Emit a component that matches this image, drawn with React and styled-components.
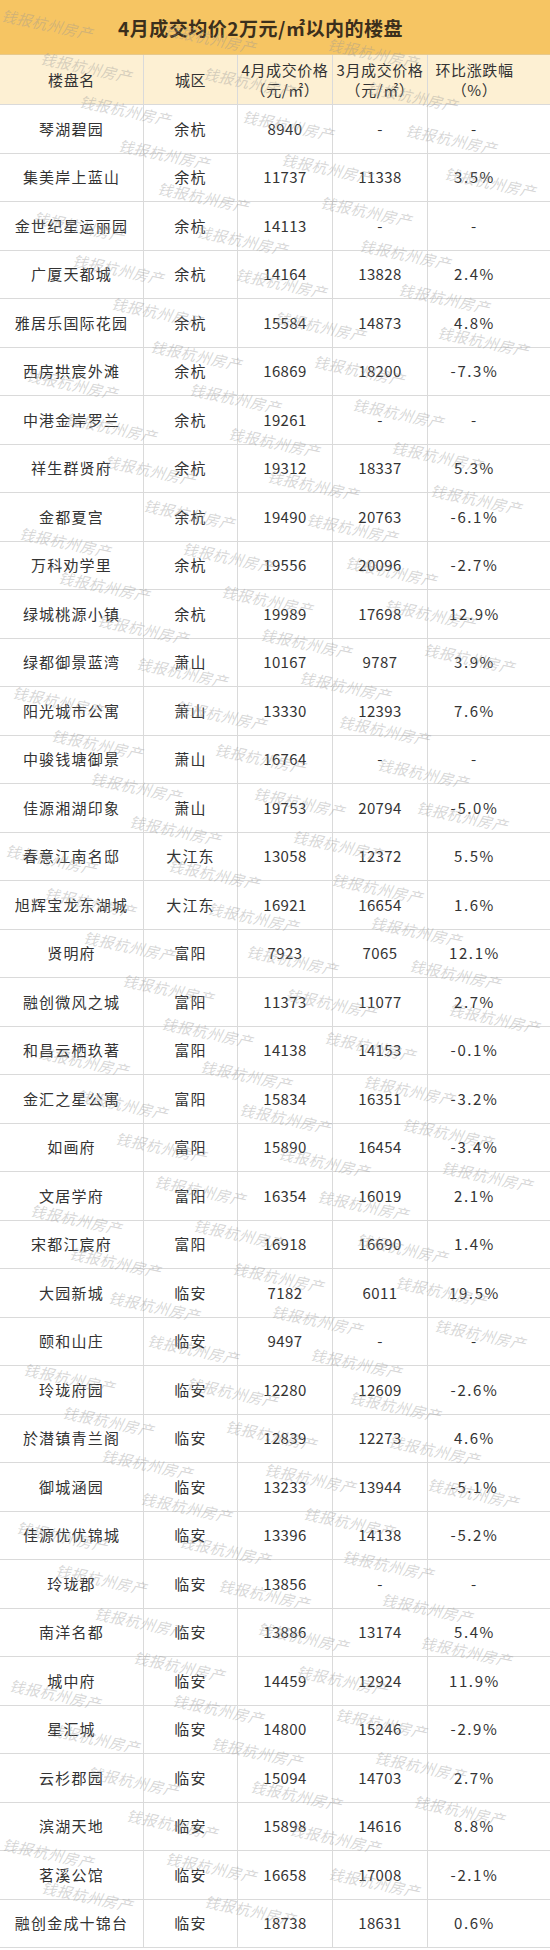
import styled, { createGlobalStyle } from "styled-components";

const GlobalStyle = createGlobalStyle`
  html, body {
    margin: 0;
    padding: 0;
    background: #ffffff;
  }
  body {
    font-family: "Noto Sans CJK SC", "Noto Sans", sans-serif;
    color: #333333;
  }
`;

const rows = [
  ["琴湖碧园", "余杭", "8940", "-", "-"],
  ["集美岸上蓝山", "余杭", "11737", "11338", "3.5%"],
  ["金世纪星运丽园", "余杭", "14113", "-", "-"],
  ["广厦天都城", "余杭", "14164", "13828", "2.4%"],
  ["雅居乐国际花园", "余杭", "15584", "14873", "4.8%"],
  ["西房拱宸外滩", "余杭", "16869", "18200", "-7.3%"],
  ["中港金岸罗兰", "余杭", "19261", "-", "-"],
  ["祥生群贤府", "余杭", "19312", "18337", "5.3%"],
  ["金都夏宫", "余杭", "19490", "20763", "-6.1%"],
  ["万科劝学里", "余杭", "19556", "20096", "-2.7%"],
  ["绿城桃源小镇", "余杭", "19989", "17698", "12.9%"],
  ["绿都御景蓝湾", "萧山", "10167", "9787", "3.9%"],
  ["阳光城市公寓", "萧山", "13330", "12393", "7.6%"],
  ["中骏钱塘御景", "萧山", "16764", "-", "-"],
  ["佳源湘湖印象", "萧山", "19753", "20794", "-5.0%"],
  ["春意江南名邸", "大江东", "13058", "12372", "5.5%"],
  ["旭辉宝龙东湖城", "大江东", "16921", "16654", "1.6%"],
  ["贤明府", "富阳", "7923", "7065", "12.1%"],
  ["融创微风之城", "富阳", "11373", "11077", "2.7%"],
  ["和昌云栖玖著", "富阳", "14138", "14153", "-0.1%"],
  ["金汇之星公寓", "富阳", "15834", "16351", "-3.2%"],
  ["如画府", "富阳", "15890", "16454", "-3.4%"],
  ["文居学府", "富阳", "16354", "16019", "2.1%"],
  ["宋都江宸府", "富阳", "16918", "16690", "1.4%"],
  ["大园新城", "临安", "7182", "6011", "19.5%"],
  ["颐和山庄", "临安", "9497", "-", "-"],
  ["玲珑府园", "临安", "12280", "12609", "-2.6%"],
  ["於潜镇青兰阁", "临安", "12839", "12273", "4.6%"],
  ["御城涵园", "临安", "13233", "13944", "-5.1%"],
  ["佳源优优锦城", "临安", "13396", "14138", "-5.2%"],
  ["玲珑郡", "临安", "13856", "-", "-"],
  ["南洋名都", "临安", "13886", "13174", "5.4%"],
  ["城中府", "临安", "14459", "12924", "11.9%"],
  ["星汇城", "临安", "14800", "15246", "-2.9%"],
  ["云杉郡园", "临安", "15094", "14703", "2.7%"],
  ["滨湖天地", "临安", "15898", "14616", "8.8%"],
  ["茗溪公馆", "临安", "16658", "17008", "-2.1%"],
  ["融创金成十锦台", "临安", "18738", "18631", "0.6%"],
];

// watermark positions, staggered but kept inside the sheet
const marks = Array.from({ length: 132 }, (_, i) => ({
  top: 4 + i * 14.4,
  left: 4 + ((i * 163) % 450),
}));

const Sheet = styled.div`
  position: relative;
  width: 550px;
  overflow: hidden;
`;

const Title = styled.div`
  height: 55px;
  background: #f6c563;
  display: flex;
  align-items: center;
  justify-content: center;
  padding-right: 29px;
  font-size: 19px;
  font-weight: 700;
  color: #3b2f1c;
  letter-spacing: 0.5px;
  border-bottom: 1px solid #e7c98c;
  box-sizing: border-box;
`;

const Table = styled.div`
  display: grid;
  grid-template-columns: 143px 94px 95px 95px 123px;
`;

const Row = styled.div`
  display: contents;
`;

const Cell = styled.div`
  height: ${(p) => (p.$head ? "50px" : "48.5px")};
  box-sizing: border-box;
  display: flex;
  flex-direction: column;
  align-items: center;
  justify-content: center;
  text-align: center;
  background: ${(p) => (p.$head ? "#fdf0d3" : "#ffffff")};
  border-bottom: 1px solid #dadada;
  border-left: ${(p) => (p.$first ? "none" : "1px solid #dadada")};
  padding-right: ${(p) => (p.$last ? "29px" : "0")};
  font-size: 15px;
  line-height: 20px;
  letter-spacing: ${(p) => (p.$num ? "0.4px" : p.$head ? "0.6px" : "1.2px")};
  color: #333333;
  white-space: nowrap;
`;

const Pct = styled.span`
  letter-spacing: 1.6px;
`;

const Overlay = styled.div`
  position: absolute;
  inset: 0;
  pointer-events: none;
  overflow: hidden;
`;

const Mark = styled.span`
  position: absolute;
  font-size: 15px;
  font-style: italic;
  color: rgba(150, 150, 150, 0.38);
  transform: rotate(12deg);
  transform-origin: left top;
  white-space: nowrap;
  letter-spacing: 0.5px;
`;

export default function App() {
  return (
    <>
      <GlobalStyle />
      <Sheet>
        <Title>4月成交均价2万元/㎡以内的楼盘</Title>
        <Table>
          <Row>
            <Cell $head $first>楼盘名</Cell>
            <Cell $head>城区</Cell>
            <Cell $head>
              <span>4月成交价格</span>
              <span>（元/㎡）</span>
            </Cell>
            <Cell $head>
              <span>3月成交价格</span>
              <span>（元/㎡）</span>
            </Cell>
            <Cell $head $last>
              <span>环比涨跌幅</span>
              <span>（%）</span>
            </Cell>
          </Row>
          {rows.map((r) => (
            <Row key={r[0]}>
              <Cell $first>{r[0]}</Cell>
              <Cell>{r[1]}</Cell>
              <Cell $num>{r[2]}</Cell>
              <Cell $num>{r[3]}</Cell>
              <Cell $num $last>
                <Pct>{r[4]}</Pct>
              </Cell>
            </Row>
          ))}
        </Table>
        <Overlay>
          {marks.map((m, i) => (
            <Mark key={i} style={{ top: m.top, left: m.left }}>
              钱报杭州房产
            </Mark>
          ))}
        </Overlay>
      </Sheet>
    </>
  );
}
